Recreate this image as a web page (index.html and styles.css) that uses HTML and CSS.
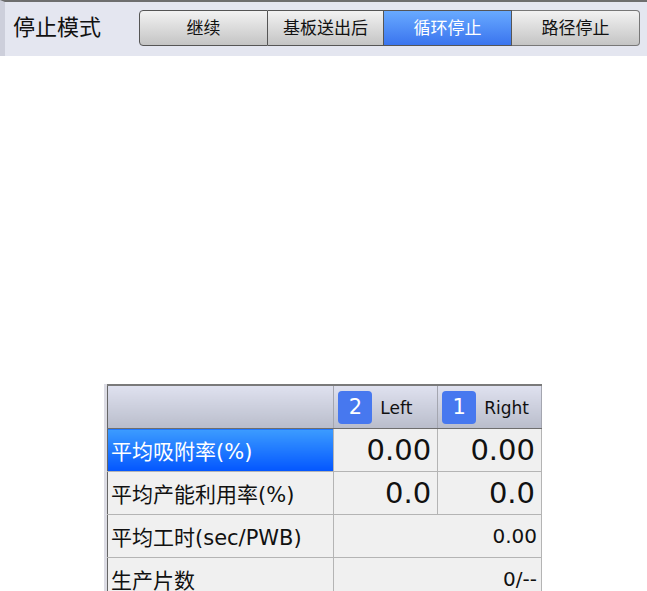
FILE: index.html
```html
<!DOCTYPE html>
<html lang="zh-CN">
<head>
    <meta charset="UTF-8">
    <title>停止模式</title>
    <link rel="stylesheet" href="styles.css">
</head>
<body>
    <div class="stop-bar">
        <span class="stop-label">停止模式</span>
        <div class="seg">
            <button class="seg-btn">继续</button>
            <button class="seg-btn">基板送出后</button>
            <button class="seg-btn active">循环停止</button>
            <button class="seg-btn">路径停止</button>
        </div>
    </div>

    <div class="stats-wrap">
        <table class="stats">
            <thead>
                <tr>
                    <th class="col-name"></th>
                    <th class="col-lane"><span class="lane-no">2</span><span class="lane-name">Left</span></th>
                    <th class="col-lane"><span class="lane-no">1</span><span class="lane-name">Right</span></th>
                </tr>
            </thead>
            <tbody>
                <tr class="selected">
                    <td class="name">平均吸附率(%)</td>
                    <td class="big">0.00</td>
                    <td class="big">0.00</td>
                </tr>
                <tr>
                    <td class="name">平均产能利用率(%)</td>
                    <td class="big">0.0</td>
                    <td class="big">0.0</td>
                </tr>
                <tr>
                    <td class="name">平均工时(sec/PWB)</td>
                    <td class="small" colspan="2">0.00</td>
                </tr>
                <tr>
                    <td class="name">生产片数</td>
                    <td class="small" colspan="2">0/--</td>
                </tr>
            </tbody>
        </table>
    </div>
</body>
</html>
```

FILE: styles.css
```css
body {
    margin: 0;
    background: #fff;
    font-family: "DejaVu Sans", "Noto Sans CJK SC", sans-serif;
    color: #111;
}

.stop-bar {
    display: flex;
    align-items: center;
    height: 54px;
    border-top: 2px solid #6e6e6e;
    border-left: 5px solid #cdcfdb;
    background: #e4e6f0;
    padding-left: 8px;
}

.stop-label {
    font-family: "Noto Sans CJK SC", sans-serif;
    font-size: 22px;
    line-height: 26px;
    width: 126px;
    margin-top: -8px;
}

.seg {
    display: flex;
    margin-top: -3px;
}

.seg-btn {
    height: 36px;
    width: 128px;
    border: 1px solid #555;
    border-left: none;
    background: linear-gradient(#f2f2f2, #c4c4c4);
    font-family: "Noto Sans CJK SC", sans-serif;
    font-size: 17px;
    color: #111;
    padding: 0 0 2px;
}

.seg-btn:first-child {
    border-left: 1px solid #555;
    border-radius: 4px 0 0 4px;
    width: 129px;
}

.seg-btn:nth-child(2) {
    width: 116px;
}

.seg-btn:last-child {
    border-radius: 0 4px 4px 0;
    border-color: #777;
}

.seg-btn.active {
    background: linear-gradient(#68aaff, #3a74ee);
    color: #fff;
}

.stats-wrap {
    margin-top: 328px;
    margin-left: 104px;
    border-left: 3px solid #dcdce4;
    width: 438px;
}

.stats {
    border-collapse: collapse;
    width: 435px;
    border-top: 2px solid #7a7a7a;
    border-left: 1px solid #666;
}

.stats th {
    height: 42px;
    padding: 0;
    background: linear-gradient(#dfe1ef, #b9bdcb);
    border-right: 1px solid #a4a6b0;
    border-bottom: 1px solid #6e6e6e;
    font-weight: normal;
    text-align: left;
}

.col-name {
    width: 226px;
}

.col-lane {
    width: 103px;
}

.lane-no {
    display: inline-block;
    width: 34px;
    height: 33px;
    line-height: 33px;
    margin: 0 8px 0 4px;
    border-radius: 4px;
    background: #4778ef;
    color: #fff;
    font-size: 21px;
    text-align: center;
    vertical-align: middle;
}

.lane-name {
    font-size: 17px;
    vertical-align: middle;
}

.stats td {
    height: 42px;
    padding: 0 4px;
    background: #f0f0f0;
    border-right: 1px solid #b4b4b4;
    border-bottom: 1px solid #b4b4b4;
}

.stats td.name {
    font-size: 21px;
    padding-left: 3px;
}

.stats tr.selected td.name {
    background: linear-gradient(#3c9cff, #0356ff);
    color: #fff;
}

.stats td.big {
    font-size: 29px;
    text-align: right;
    padding-right: 6px;
}

.stats td.small {
    font-size: 20px;
    text-align: right;
    padding-right: 4px;
}
```
